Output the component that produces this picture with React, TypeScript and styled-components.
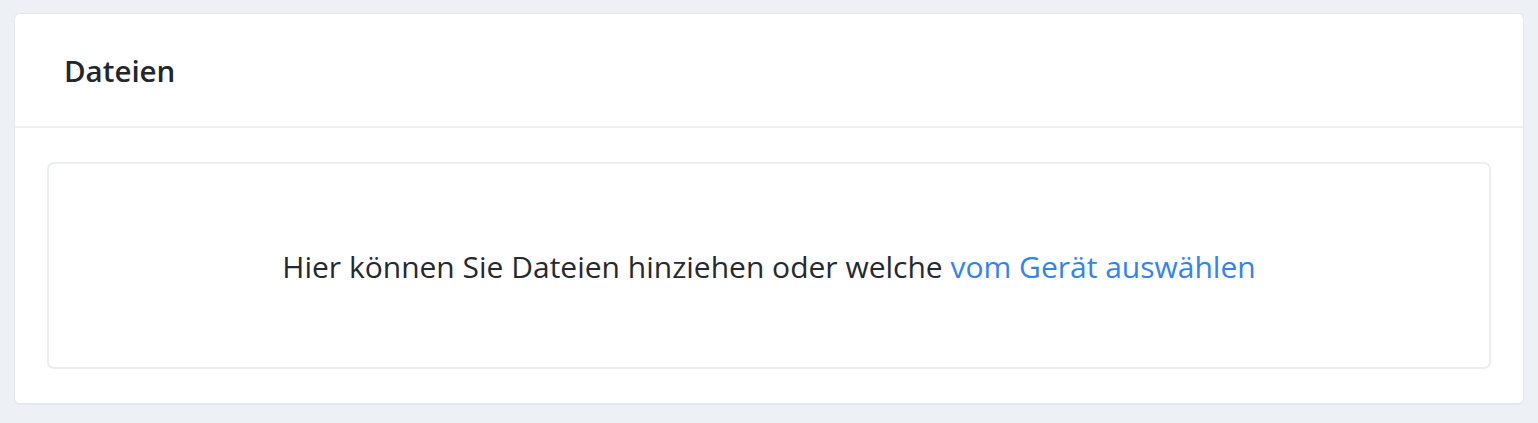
import React from "react";
import styled, { createGlobalStyle } from "styled-components";

const Global = createGlobalStyle`
  html, body { margin: 0; padding: 0; background: #edf0f5; }
  body { font-family: "Open Sans", "Noto Sans", sans-serif; }
`;

const Page = styled.div`
  padding: 13px 14px 19px 14px;
`;

const Card = styled.section`
  background: #ffffff;
  border: 1px solid #e3e7ee;
  border-bottom-width: 2px;
  border-radius: 6px;
  display: flex;
  flex-direction: column;
`;

const Header = styled.header`
  height: 112px;
  display: flex;
  align-items: center;
  padding: 0 49px;
  border-bottom: 2px solid #edf0f5;
`;

const Title = styled.h2`
  margin: 0;
  font-size: 29.5px;
  font-weight: 600;
  color: #23262b;
`;

const Body = styled.div`
  padding: 34px 32px 34px 32px;
`;

const DropZone = styled.div`
  height: 207px;
  box-sizing: border-box;
  border: 2px solid #eaedf2;
  border-radius: 7px;
  display: flex;
  align-items: center;
  justify-content: center;
  padding-top: 2px;
  font-size: 30px;
  color: #26292e;
`;

const Link = styled.a`
  color: #3183f6;
  text-decoration: none;
  cursor: pointer;
`;

export default function App() {
  return (
    <>
      <Global />
      <Page>
        <Card>
          <Header>
            <Title>Dateien</Title>
          </Header>
          <Body>
            <DropZone>
              <span>
                Hier können Sie Dateien hinziehen oder welche{" "}
                <Link>vom Gerät auswählen</Link>
              </span>
            </DropZone>
          </Body>
        </Card>
      </Page>
    </>
  );
}
